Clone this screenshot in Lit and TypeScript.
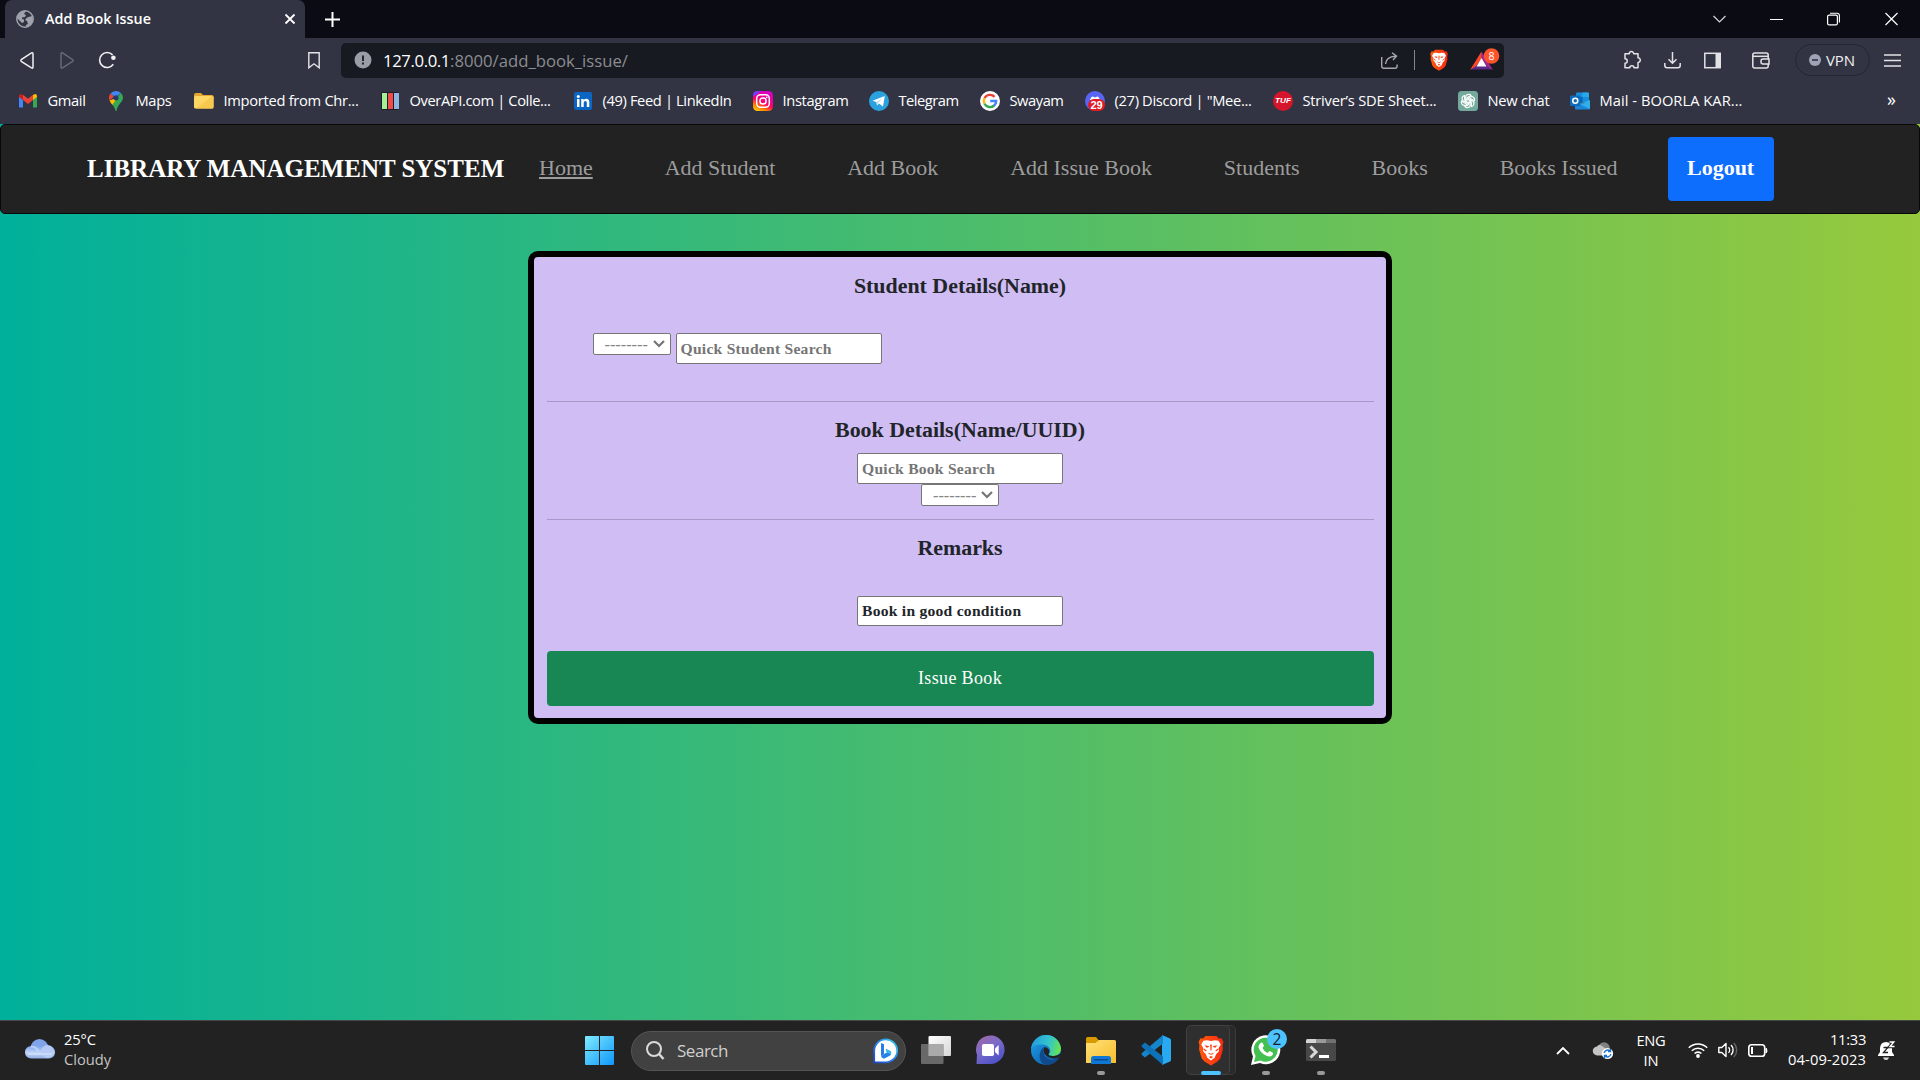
import { LitElement, html, css, svg, type TemplateResult } from "lit";
import { customElement, property } from "lit/decorators.js";

/** Single line label whose tracking is adjusted so that it fills a given width. */
@customElement("fit-label")
class FitLabel extends LitElement {
  @property() text = "";
  @property({ type: Number }) w = 0;
  static styles = css`
    :host { display: inline-block; white-space: pre; flex: none; }
    .t { display: inline-block; }
  `;
  firstUpdated() {
    const s = this.renderRoot.querySelector(".t") as HTMLElement;
    const natural = s.getBoundingClientRect().width;
    s.style.letterSpacing = `${(this.w - natural) / this.text.length}px`;
  }
  render() {
    return html`<span class="t">${this.text}</span>`;
  }
}

const fit = (text: string, w: number) => html`<fit-label .text=${text} .w=${w}></fit-label>`;

const icon = (w: number, h: number, body: TemplateResult, vb = `0 0 ${w} ${h}`) =>
  html`<svg class="ic" width=${w} height=${h} viewBox=${vb} fill="none">${body}</svg>`;

const lion = svg`
  <path d="M7 1h11l2.400 2.600 2.600-.3L25 7l-.9 3 .3 4.500-2.600 9L19 26.600l-6.500 3.900L6 26.600 3.200 23.500.6 14.500.9 10 0 7l2-3.700 2.600.3z" fill="url(#lg)"/>
  <path d="M8.500 5.200 12.500 6l4-.8 3.600.6 2.200 3.700-2.200 3.800.5 2.700-3 3.200-1.400 3.600L12.500 25.500 8.800 22.800 7.400 19.200l-3-3.200.5-2.700L2.700 9.500l2.200-3.700z" fill="#fff"/>
  <path d="M6 10.300l4.200.6.3 1.100-2.300.8zM19 10.300l-4.200.6-.3 1.100 2.300.8zM11.700 9.500h1.600l-.3 6h-1zM9 17.500l3.500 1.200 3.500-1.200-2.200 1.900h-2.600zM10.500 22l2-1 2 1-2 1.400z" fill="#fb3d10"/>
  <path d="M5.200 14l2.600 2M19.800 14l-2.600 2" stroke="#fb3d10" stroke-width="1.100"/>
  <defs><linearGradient id="lg" x1="0" x2="1" y1="0" y2="0"><stop stop-color="#ff5a10"/><stop offset="1" stop-color="#f52a10"/></linearGradient></defs>`;

const bookmarks: { text: string; w: number; art: TemplateResult }[] = [
  { text: "Gmail", w: 38, art: svg`
    <path d="M1 5v11.500h4V9z" fill="#4285f4"/><path d="M19 5v11.500h-4V9z" fill="#34a853"/>
    <path d="M1 6V5q0-2 2-2l2 1v5z" fill="#c5221f"/><path d="M5 9V3.800l5 3.900 5-3.900V9l-5 4z" fill="#ea4335"/><path d="M15 9V4l2-1q2 0 2 2v1z" fill="#fbbc04"/>` },
  { text: "Maps", w: 36, art: svg`
    <path d="M10 0a7 7 0 0 0-5.500 2.600L10 7l4.700-5.200A7 7 0 0 0 10 0z" fill="#4285f4"/>
    <path d="M4.500 2.600A7 7 0 0 0 3.500 9.500L8 5.500z" fill="#ea4335"/>
    <path d="M3.500 9.500q.8 2 3 4.500L14 4.500 10 7z" fill="#fbbc04"/>
    <path d="M14.700 1.800Q18 5 16.500 9c-1 2.500-5 5-6 11h-1c-.5-2.500-1.500-4.500-3-6z" fill="#34a853"/>
    <circle cx="10" cy="6.800" r="2.600" fill="#253a6e"/>` },
  { text: "Imported from Chr...", w: 135, art: svg`
    <path d="M0 4q0-2 2-2h5l2 2h9q1.500 0 1.500 1.500V8H0z" fill="#e4a832"/><rect y="5" width="19.500" height="12.500" rx="1.500" fill="#fdd663"/><path d="M18 5q1.500 0 1.500 1.500V16q0 1.500-1.500 1.500H2z" fill="#f8c94e"/>` },
  { text: "OverAPI.com | Colle...", w: 141, art: svg`
    <rect x="1" y="1" width="18" height="18" rx="2" fill="#1c1d28"/><path d="M2 2h5v16H2z" fill="#a5ef94"/><path d="M8 2h5v16H8z" fill="#f04c4c"/><path d="M14 2h5v16h-5z" fill="#8db5dd"/>` },
  { text: "(49) Feed | LinkedIn", w: 129, art: svg`
    <rect x="1" y="1" width="18" height="18" rx="2" fill="#0a66c2"/><path d="M4 8h2.500v8H4zM8.200 8h2.400v1.200Q11.500 7.800 13.300 7.800q3 0 3 3.500V16h-2.500v-4.200q0-1.800-1.300-1.800-1.800 0-1.800 2V16H8.200z" fill="#fff"/><circle cx="5.250" cy="5.400" r="1.500" fill="#fff"/>` },
  { text: "Instagram", w: 66, art: svg`
    <defs><linearGradient id="ig" x1=".1" y1="1" x2=".6" y2="0"><stop stop-color="#ffd600"/><stop offset=".25" stop-color="#ff7a00"/><stop offset=".5" stop-color="#ff0069"/><stop offset="1" stop-color="#d300c5"/></linearGradient></defs>
    <rect width="20" height="20" rx="4.500" fill="url(#ig)"/><path d="M0 6V4.500Q0 0 4.500 0H8z" fill="#7638fa"/>
    <rect x="3.700" y="3.700" width="12.600" height="12.600" rx="3.800" stroke="#fff" stroke-width="1.500"/><circle cx="10" cy="10" r="3.100" stroke="#fff" stroke-width="1.500"/><circle cx="13.700" cy="6.300" r=".9" fill="#fff"/>` },
  { text: "Telegram", w: 60, art: svg`
    <circle cx="10" cy="10" r="10" fill="#2ba2de"/><path d="M3.500 9.800 15.800 5 14 15.500l-4-3-2 2-.6-3.500z" fill="#fff"/><path d="M7.500 11l6-4-4.500 5-1 2.500z" fill="#b9d9ec"/>` },
  { text: "Swayam", w: 54, art: svg`
    <circle cx="10" cy="10" r="10" fill="#fff"/><g stroke-width="2.400"><path d="M14.600 5.900A6.200 6.200 0 0 0 4.500 7.200" stroke="#ea4335"/><path d="M4.500 7.200a6.200 6.200 0 0 0 0 5.600" stroke="#fbbc05"/><path d="M4.500 12.800a6.200 6.200 0 0 0 9.700 1.700" stroke="#34a853"/><path d="M14 14.700A6 6 0 0 0 16.200 10h-6" stroke="#4285f4"/></g>` },
  { text: "(27) Discord | \"Mee...", w: 137, art: svg`
    <circle cx="10" cy="10" r="10" fill="#5865f2"/><path d="M5 9q.6-3 3-3.700l.7 1h2.600l.7-1q2.400.7 3 3.700z" fill="#fff"/><rect x="3" y="8" width="17" height="12" rx="6" fill="#e01b24"/><text x="11.500" y="17.800" text-anchor="middle" font-size="11" font-weight="700" fill="#fff" font-family="Liberation Sans, sans-serif">29</text>` },
  { text: "Striver’s SDE Sheet...", w: 134, art: svg`
    <circle cx="10" cy="10" r="10" fill="#d5152c"/><text x="10" y="12.300" text-anchor="middle" font-size="6.500" font-weight="700" font-style="italic" fill="#fff" textLength="16" lengthAdjust="spacingAndGlyphs" font-family="Liberation Sans, sans-serif">TUF</text>` },
  { text: "New chat", w: 62, art: svg`
    <rect width="20" height="20" rx="3.500" fill="#74aa9c"/><g stroke="#fff" stroke-width="1.100">${[0, 60, 120, 180, 240, 300].map(
      (a) => svg`<path transform="rotate(${a} 10 10)" d="M7.700 11.300V6.200Q7.900 3.400 10.600 3.200q1.600 0 2.500 1.100L9.200 6.600v3"/>`)}</g>` },
  { text: "Mail - BOORLA KAR...", w: 143, art: svg`
    <rect x="6" y="1.500" width="13" height="10" rx="1" fill="#1490df"/><path d="M12.500 1.500H18q1 0 1 1V6h-6.500z" fill="#28a8ea"/><path d="M6 6h6.500v5H6z" fill="#0364b8"/><path d="M5 9l8 4.500L20 9v8.500q0 1-1 1H6q-1 0-1-1z" fill="#1a86d9"/><path d="M20 9v9L9 13z" fill="#3cc0f2" opacity=".7"/><rect y="4.500" width="10.500" height="10.500" rx="1" fill="#0f6cbd"/><circle cx="5.250" cy="9.800" r="2.500" stroke="#fff" stroke-width="1.500"/>` },
];

@customElement("browser-chrome")
class BrowserChrome extends LitElement {
  static styles = css`
    :host { display: block; height: 124px; background: #323443; color: #fff; font: 14.700px/20px "Open Sans", "Noto Sans", sans-serif; box-sizing: border-box; }
    .ic { display: block; flex: none; overflow: visible; }
    .tabs { display: flex; height: 38px; background: #0b0b14; padding-left: 5px; align-items: center; }
    .tab { display: flex; align-items: center; width: 300px; height: 38px; background: #323443; border-radius: 7px 7px 0 0; padding: 0 10px 0 11px; box-sizing: border-box; font-weight: 600; font-size: 14.300px; }
    .tab fit-label { margin-left: 11px; flex: 1; }
    .plus { margin-left: 20px; }
    .controls { margin-left: auto; display: grid; grid-template-columns: repeat(4, 57.300px); justify-items: center; align-items: center; }
    .bar { display: flex; align-items: center; height: 44px; padding-left: 20px; }
    .fwd { margin-left: 27px; }
    .reload { margin-left: 24px; }
    .mark { margin-left: 191px; }
    .url { display: flex; align-items: center; box-sizing: border-box; width: 1163px; height: 35px; margin-left: 21px; padding: 0 4px 0 13px; background: #181a21; border-radius: 5px; font-size: 16.700px; }
    .addr { display: flex; flex: 1; margin-left: 11px; padding-top: 1px; }
    .path { color: #8b8d92; }
    .sep { width: 1px; height: 20px; background: #85868a; margin: 0 14px 0 16px; }
    .bat { margin-left: 21px; }
    .actions { display: flex; align-items: center; margin-left: 120px; }
    .actions .dl { margin-left: 23px; } .actions .side { margin-left: 23px; } .actions .wal { margin-left: 31px; }
    .vpn { display: flex; align-items: center; gap: 5px; box-sizing: border-box; width: 75px; height: 32px; margin: 0 14px 0 25px; padding-left: 13px; border: 1px solid #242633; border-radius: 16px; font-size: 15px; color: #f0f0f2; }
    .vpn fit-label { padding-bottom: 1px; }
    .marks { display: grid; grid-template-columns: 88px 88px 186px 193px 180px 116px 111px 105px 188px 185px 112px 1fr auto; align-items: center; height: 38px; padding: 0 24px 0 18px; }
    .mk { display: flex; align-items: center; gap: 10px; }
    .mk fit-label { padding-bottom: 2px; margin-left: -0.500px; }
    .more { font-size: 18px; line-height: 18px; padding-bottom: 4px; }
  `;
  render() {
    return html`
      <div class="tabs">
        <div class="tab">
          ${icon(18, 18, svg`<circle cx="9" cy="9" r="8.200" stroke="#9fa1ab" stroke-width="1.500"/><path d="M1 8Q2 2 8 1h2L8 4l2 1-1 2-3 .5V9l2 .5L8 12l-2 1z" fill="#9fa1ab"/><path d="M11 7.500 16 6l1 4q-1 6-7 7.200V15l2-1-1-3-2-1z" fill="#9fa1ab"/>`)}
          ${fit("Add Book Issue", 106)}
          ${icon(10, 10, svg`<path d="M.5.5l9 9M9.500.5l-9 9" stroke="#fff" stroke-width="1.800"/>`)}
        </div>
        <div class="plus">${icon(15, 15, svg`<path d="M7.500 0v15M0 7.500h15" stroke="#fff" stroke-width="2"/>`)}</div>
        <div class="controls">
          ${icon(13, 8, svg`<path d="M.5 1 6.500 7l6-6" stroke="#d5d5d8" stroke-width="1.200"/>`)}
          ${icon(13, 1, svg`<path d="M0 .5h13" stroke="#fff"/>`)}
          ${icon(13, 13, svg`<rect x="-.4" y="2.100" width="9.800" height="9.800" rx="1.500" stroke="#fff" stroke-width="1.200"/><path d="M2 .2h7q2.400 0 2.400 2.400V9.500" stroke="#fff" stroke-width="1.100"/>`)}
          ${icon(13, 13, svg`<path d="M.5 0l12 12M12.500 0l-12 12" stroke="#fff" stroke-width="1.200"/>`)}
        </div>
      </div>
      <div class="bar">
        ${icon(14, 17, svg`<path d="M11.500.9Q13 .3 13 2v13q0 1.700-1.500.9L1.200 9.300q-.8-.8 0-1.600z" stroke="#f0f0f2" stroke-width="1.500"/>`)}
        <div class="fwd">${icon(14, 17, svg`<path d="M1.500.9Q0 .3 0 2v13q0 1.700 1.500.9L11.800 9.300q.8-.8 0-1.600z" stroke="#6b6d78" stroke-width="1.400"/>`)}</div>
        <div class="reload">${icon(18, 17, svg`<path d="M13.600 2.900A7.500 7.500 0 1 0 14.300 12.300" stroke="#f0f0f2" stroke-width="1.600"/><circle cx="14.400" cy="5.800" r="2.300" fill="#f0f0f2"/>`)}</div>
        <div class="mark">${icon(12, 17, svg`<path d="M.8.800h10.400v15L6 11.800.8 15.800z" stroke="#e4e4e8" stroke-width="1.400"/>`)}</div>
        <div class="url">
          ${icon(18, 18, svg`<circle cx="9" cy="9" r="8.500" fill="#9a9ca6"/><path d="M9 4.500v5.500M9 11.500v2" stroke="#23252e" stroke-width="2"/>`)}
          <div class="addr">${fit("127.0.0.1", 67)}<span class="path">${fit(":8000/add_book_issue/", 178)}</span></div>
          ${icon(17, 17, svg`<path d="M.7 5v9q0 2.200 2.200 2.200h11q2.200 0 2.200-2.200v-1.500" stroke="#a7a8ac" stroke-width="1.400"/><path d="M4.500 12q.5-7.300 10-7.800M11 .8l4.500 3.400L12 8" stroke="#a7a8ac" stroke-width="1.400"/>`)}
          <span class="sep"></span>
          ${icon(20, 22, lion, "0 0 25 31")}
          <div class="bat">${icon(30, 22, svg`<path d="M11.500 3 1 20.500h21z" fill="#5b2a86"/><path d="M11.500 2.500V10L6 17l-6 4z" fill="#ff4724"/><path d="M11.500 2.500 23 21l-6-4-5.500-7z" fill="#a3278f"/><path d="M11.500 9l5 8.500h-10z" fill="#fff"/><circle cx="21.500" cy="7" r="7.800" fill="#fb542b"/><text x="21.500" y="10.700" text-anchor="middle" font-size="10.500" fill="#fff" font-family="Open Sans, sans-serif">8</text>`)}</div>
        </div>
        <div class="actions">
          ${icon(17, 18, svg`<path d="M1 2.800h4.300a2.200 2.200 0 1 1 4.400 0H14v4a2.200 2.200 0 1 1 0 4.600v5.400H10a2.100 2.100 0 1 0-4.200 0H1v-4.600a2.200 2.200 0 1 0 0-4.500z" stroke="#e2e2e6" stroke-width="1.500" stroke-linejoin="round"/>`)}
          <div class="dl">${icon(17, 17, svg`<path d="M8.500 0v11M4.500 7.300l4 4 4-4M.8 11v2.500q0 2.200 2.200 2.200h11q2.200 0 2.200-2.200V11" stroke="#e2e2e6" stroke-width="1.500"/>`)}</div>
          <div class="side">${icon(17, 17, svg`<rect x=".8" y="1.300" width="15.400" height="14.400" stroke="#e2e2e6" stroke-width="1.500"/><path d="M11.500 1H17v15h-5.500z" fill="#e2e2e6"/>`)}</div>
          <div class="wal">${icon(18, 17, svg`<rect x=".8" y="1" width="15.400" height="15" rx="2" stroke="#e2e2e6" stroke-width="1.500"/><path d="M1 4.300h15.500" stroke="#e2e2e6" stroke-width="1.500"/><path d="M17 7h-6q-2 0-2 2v1q0 2 2 2h6z" fill="#323443" stroke="#e2e2e6" stroke-width="1.500"/>`)}</div>
          <div class="vpn">${icon(12, 12, svg`<circle cx="6" cy="6" r="6" fill="#a0a2b8"/><path d="M3 6h6" stroke="#323443" stroke-width="1.600"/>`)}${fit("VPN", 29)}</div>
          ${icon(17, 13, svg`<path d="M0 1h17M0 6.500h17M0 12h17" stroke="#e2e2e6" stroke-width="1.500"/>`)}
        </div>
      </div>
      <div class="marks">
        ${bookmarks.map((b) => html`<div class="mk">${icon(20, 20, b.art)}${fit(b.text, b.w)}</div>`)}
        <span class="more">»</span>
      </div>`;
  }
}

@customElement("library-page")
class LibraryPage extends LitElement {
  static styles = css`
    :host { display: block; flex: 1; background: linear-gradient(to right, #00b09b, #96c93d); font-family: "Liberation Serif", serif; color: #212529; }
    nav { display: flex; align-items: center; box-sizing: border-box; height: 90px; padding-left: 86px; background: #222; border: 1px solid #080808; border-radius: 5px; font-size: 22px; color: #9d9d9d; }
    .brand { font-size: 25px; font-weight: 700; color: #fff; width: 452px; white-space: nowrap; }
    .links { display: flex; gap: 71.900px; padding-bottom: 3px; white-space: nowrap; }
    .on { text-decoration: underline; text-decoration-thickness: 2px; text-underline-offset: 2px; }
    .logout { display: flex; align-items: center; justify-content: center; box-sizing: border-box; width: 106px; height: 64px; margin-left: 50px; padding-bottom: 3px; border-radius: 4px; background: #0d6efd; color: #fff; font-weight: 700; }
    .card { box-sizing: border-box; width: 864px; height: 473px; margin: 37px auto 0; padding: 0 12.500px; border: 6px solid #000; border-radius: 10px; background: #d0bdf4; display: flex; flex-direction: column; align-items: center; }
    h2 { margin: 0; display: flex; align-items: center; font-size: 21.900px; font-weight: 700; box-sizing: border-box; }
    .h-a { height: 56px; padding-top: 2px; } .h-b { height: 51px; padding-top: 4px; } .h-c { height: 55px; }
    .row { align-self: stretch; display: flex; align-items: flex-start; gap: 5px; padding: 20px 0 37px 46px; }
    .field { box-sizing: border-box; width: 206px; height: 31px; flex: none; padding: 0 4px; line-height: 29px; border: 1px solid #767676; border-radius: 2px; background: #fff; font-size: 15.600px; letter-spacing: 0.250px; font-weight: 700; white-space: nowrap; }
    .ph { color: #757575; }
    .pick { display: flex; align-items: center; justify-content: space-between; box-sizing: border-box; width: 78px; height: 22px; flex: none; padding: 0 5px 0 11px; border: 1px solid #767676; border-radius: 2px; background: #fff; font-size: 16.300px; line-height: 18px; color: #858585; }
    .pick span { padding-top: 1px; }
    .line { align-self: stretch; height: 1px; flex: none; background: #a798c7; }
    .pick + .line { margin-top: 13px; }
    .remark { margin-top: 21px; height: 30px; line-height: 28px; }
    .issue { align-self: stretch; display: flex; align-items: center; justify-content: center; box-sizing: border-box; height: 55px; margin-top: 25px; padding-bottom: 1px; border-radius: 4px; background: #198754; color: #fff; font-size: 18px; letter-spacing: 0.350px; }
  `;
  private pick() {
    return html`<div class="pick"><span>--------</span><svg width="12" height="8" viewBox="0 0 12 8" fill="none"><path d="M1 1l5 5 5-5" stroke="#757575" stroke-width="2.200"/></svg></div>`;
  }
  render() {
    return html`
      <nav>
        <div class="brand">LIBRARY MANAGEMENT SYSTEM</div>
        <div class="links">
          <span class="on">Home</span><span>Add Student</span><span>Add Book</span><span>Add Issue Book</span><span>Students</span><span>Books</span><span>Books Issued</span>
        </div>
        <div class="logout">Logout</div>
      </nav>
      <div class="card">
        <h2 class="h-a">Student Details(Name)</h2>
        <div class="row">${this.pick()}<div class="field ph">Quick Student Search</div></div>
        <div class="line"></div>
        <h2 class="h-b">Book Details(Name/UUID)</h2>
        <div class="field ph">Quick Book Search</div>
        ${this.pick()}
        <div class="line"></div>
        <h2 class="h-c">Remarks</h2>
        <div class="field remark">Book in good condition</div>
        <div class="issue">Issue Book</div>
      </div>`;
  }
}

@customElement("task-bar")
class TaskBar extends LitElement {
  static styles = css`
    :host { display: grid; grid-template-columns: 585px auto 1fr; align-items: center; box-sizing: border-box; height: 60px; background: #222; border-top: 1px solid #484848; color: #fff; font: 14.700px/20px "Open Sans", "Noto Sans", sans-serif; }
    .ic { display: block; flex: none; overflow: visible; }
    .weather { display: flex; align-items: center; gap: 9px; padding-left: 25px; }
    .weather .ic { position: relative; top: -2px; }
    .two { display: flex; flex-direction: column; padding-bottom: 3px; }
    .dim { color: #c4c4c4; }
    .mid { display: flex; align-items: center; }
    .search { display: flex; align-items: center; box-sizing: border-box; width: 275px; height: 40px; margin: 0 2px 0 17px; padding: 0 7px 0 14px; border: 1px solid #555; border-radius: 20px; background: #414141; color: #cfcfcf; font-size: 17px; }
    .search fit-label { flex: 1; margin-left: 13px; }
    .apps { display: grid; grid-template-columns: repeat(8, 55px); }
    .app { display: grid; grid-template-rows: 42px 4px; height: 59px; box-sizing: border-box; padding-top: 8px; justify-items: center; align-items: center; position: relative; align-content: start; }
    .dot { width: 8px; height: 4px; border-radius: 2px; background: #999; }
    .run { width: 20px; background: #4cc2ff; }
    .tile { position: absolute; left: 3px; top: 4px; width: 44px; height: 50px; box-sizing: border-box; border: 1px solid #414141; border-radius: 5px; background: #2f2f2f; }
    .stack { position: absolute; left: 31px; top: 4px; width: 22px; height: 50px; box-sizing: border-box; border: 1px solid #3a3a3a; border-radius: 5px; background: #2a2a2a; }
    .app .ic, .app .dot { position: relative; }
    .tray { display: flex; align-items: center; justify-content: flex-end; padding-right: 25px; }
    .cloud { margin: 0 23px 0 23px; }
    .lang { align-items: center; margin-right: 22px; width: 30px; padding-bottom: 1px; }
    .status { display: flex; gap: 10px; align-items: center; padding-bottom: 1px; }
    .clock { align-items: flex-end; margin: 0 12px 0 20px; }
  `;
  render() {
    const app = (art: TemplateResult, state = "") => html`
      <div class="app">
        ${state === "run" ? html`<span class="stack"></span><span class="tile"></span>` : ""}
        ${art}${state ? html`<span class="dot ${state}"></span>` : ""}
      </div>`;
    return html`
      <div class="weather">
        ${icon(30, 20, svg`<defs><linearGradient id="cl" x1="0" x2="0" y1="0" y2="1"><stop stop-color="#7da5ee"/><stop offset=".55" stop-color="#c3d5f7"/><stop offset="1" stop-color="#8faee6"/></linearGradient></defs><circle cx="14.500" cy="9" r="9" fill="#7fa4ea"/><rect y="7" width="30" height="12.500" rx="6.200" fill="url(#cl)"/><circle cx="22.500" cy="12.500" r="6.500" fill="#b5cbf5"/><path d="M6 8q5-1 7 4M3 15h24" stroke="#d7e4fb" stroke-width="2" opacity=".6"/>`)}
        <div class="two">${fit("25°C", 32)}<span class="dim">${fit("Cloudy", 47)}</span></div>
      </div>
      <div class="mid">
        ${icon(29, 29, svg`<defs><linearGradient id="wn" x1="0" y1="0" x2="1" y2="1"><stop stop-color="#7fecff"/><stop offset="1" stop-color="#0f96fa"/></linearGradient></defs><path d="M1 0h13v14H0V1q0-1 1-1zM15 0h13q1 0 1 1v13H15zM0 15h14v14H1q-1 0-1-1zM15 15h14v13q0 1-1 1H15z" fill="url(#wn)"/>`)}
        <div class="search">
          ${icon(18, 19, svg`<circle cx="8" cy="8" r="7" stroke="#dadada" stroke-width="2"/><path d="M13 13l4.500 5" stroke="#dadada" stroke-width="2.500"/>`)}
          ${fit("Search", 51)}
          ${icon(25, 26, svg`<defs><linearGradient id="bg" x1="1" y1="0" x2="0" y2="1"><stop stop-color="#32d5e8"/><stop offset=".5" stop-color="#2a80f0"/><stop offset="1" stop-color="#1b48c8"/></linearGradient></defs><path d="M1.200 24.300V13A11.500 11.500 0 1 1 12.700 24.300z" fill="#fff" stroke="url(#bg)" stroke-width="1.800"/><path d="M8 5l3 1.200v10L8 18z" fill="#2a7bea"/><path d="M8 18l3.500-2.200 2.500-1.300-1.300-3.500 5 2.200q1.300 3-1 4.500L11.500 20.500Q9 21 8 18z" fill="#2583e8"/><path d="M12.500 10.800l5 2.200q1.500 1.700.3 3.500l-3.800-2z" fill="#35b9f0"/>`)}
        </div>
        <div class="apps">
          ${app(icon(30, 28, svg`<defs><linearGradient id="tv" x1="0" y1="0" x2="1" y2="1"><stop stop-color="#fff"/><stop offset="1" stop-color="#d6d6d6"/></linearGradient></defs><rect x="7.500" width="22.500" height="20" rx="1" fill="url(#tv)"/><rect y="8" width="22.500" height="20" rx="1" fill="#767676" opacity=".85"/><path d="M7.500 8h15v12h-15z" fill="#aaa"/>`))}
          ${app(icon(29, 29, svg`<defs><linearGradient id="ch" x1="0" y1="0" x2=".6" y2="1"><stop stop-color="#a5699f"/><stop offset=".5" stop-color="#7b6bc9"/><stop offset="1" stop-color="#4f53c7"/></linearGradient></defs><path d="M.5 28 1 19A14.300 14.300 0 1 1 14.500 28z" fill="url(#ch)"/><rect x="6" y="8" width="12" height="12" rx="1.800" fill="#fff"/><path d="M19 12.500 22.700 9v10.500L19 16z" fill="#fff"/>`))}
          ${app(icon(30, 30, svg`<defs><linearGradient id="e1" x1="0" x2="1" y1=".3" y2=".5"><stop stop-color="#229be0"/><stop offset=".6" stop-color="#35c6c9"/><stop offset="1" stop-color="#66e34f"/></linearGradient><linearGradient id="e2" x1="0" x2="1" y1="0" y2="1"><stop stop-color="#1ea4e8"/><stop offset="1" stop-color="#0a50a8"/></linearGradient></defs><circle cx="15" cy="15" r="15" fill="url(#e2)"/><path d="M.3 12.500A15 15 0 0 1 30 13.500c0 5.500-4 7.500-8 7.500-3 0-4.500-1-4-2 3-2.500 1-9-6.500-9.500C6 9 1 11 .3 14z" fill="url(#e1)"/><path d="M13 12c-3 7 3 14 10 12.500 3-.5 4.500-1.500 5-1.500A15 15 0 0 1 15 30C7 28 7 16 13 12z" fill="#114a8b"/><path d="M13.500 12q-2 3-.5 6 3 5 10 5.500 3.500 0 5.500-1.500l1.200-4q-3 3.500-8.500 3-4.500-.5-3.700-2.300 1.500-1.500.3-4.200-1.500-2.500-4.300-2.500z" fill="#222"/>`))}
          ${app(icon(30, 27, svg`<defs><linearGradient id="fo" x1="0" y1="0" x2="1" y2="1"><stop stop-color="#ffe078"/><stop offset="1" stop-color="#f9be2c"/></linearGradient></defs><path d="M0 1.500Q0 0 1.500 0H10l3 3.500V9H0z" fill="#d99a00"/><path d="M0 6h9.500L13 3h15.500Q30 3 30 4.500V26H0z" fill="url(#fo)"/><path d="M5 27v-5.500Q5 19 7.500 19h15q2.500 0 2.500 2.500V27z" fill="#0f78d4"/><path d="M8.500 22.800h13" stroke="#0b4a94" stroke-width="1.500" stroke-linecap="round"/>`), "dot-on")}
          ${app(icon(30, 30, svg`<path d="M21 0 29 3.500Q30 4 30 5v20q0 1-1 1.500L21 30z" fill="#29a9f2"/><path d="M22 0v8.500L4 22.500 1 20q-1-1 0-2z" fill="#1586cc"/><path d="M22 30v-8.500L4 7.500 1 10q-1 1 0 2z" fill="#0d72b8"/>`))}
          ${app(icon(26, 31, lion, "0 0 25 31"), "run")}
          ${app(icon(30, 30, svg`<path d="M0 30 2 21.500A14.500 14.500 0 1 1 9 28z" fill="#fff"/><path d="M3 27l1.500-6A12 12 0 1 1 9.500 25.500z" fill="#43c04f"/><path d="M9 8.500q2-2 3 0l1 2.500-1.500 2q1.500 3.500 5 5l2-2 3 1.500q1.500 1-.5 3-2 2-6 0-6-3-7.500-8 0-2.500 1.500-4z" fill="#fff"/><circle cx="26" cy="4" r="10" fill="#4cc2ff"/><text x="26" y="9.700" text-anchor="middle" font-size="15.500" fill="#102030" font-family="Open Sans, sans-serif">2</text>`), "dot-on")}
          ${app(icon(30, 22, svg`<rect width="30" height="22" rx="1.500" fill="#484848"/><path d="M1.500 0H10v4H0V1.500Q0 0 1.500 0z" fill="#d4d4d4"/><path d="M10 0h10v4H10z" fill="#999"/><path d="M20 0h8.500Q30 0 30 1.500V4H20z" fill="#707070"/><path d="M4.500 7.500l5.500 5.500-5.500 5.500" stroke="#d8d8d8" stroke-width="3"/><path d="M13 17.500h10" stroke="#fff" stroke-width="3"/>`), "dot-on")}
        </div>
      </div>
      <div class="tray">
        ${icon(14, 8, svg`<path d="M1 7l6-6 6 6" stroke="#fff" stroke-width="1.800"/>`)}
        <div class="cloud">${icon(20, 17, svg`<circle cx="11" cy="6" r="5.800" fill="#808080"/><path d="M4.500 13.500a4.500 4.500 0 0 1-.5-9Q6 2 9 4l8 6v3.500z" fill="#c4c4c4"/><circle cx="14.500" cy="11.500" r="5.600" fill="#fff"/><path d="M11.200 11a3.500 3.500 0 0 1 6-1.800M17.800 12a3.500 3.500 0 0 1-6 1.800M17.500 7v2.500H15M11.500 16v-2.500H14" stroke="#1673cf" stroke-width="1.400"/>`)}</div>
        <div class="two lang">${fit("ENG", 29)}${fit("IN", 15)}</div>
        <div class="status">
          ${icon(20, 16, svg`<path d="M.8 5.800a13 13 0 0 1 18.400 0M3.800 8.800a8.800 8.800 0 0 1 12.400 0M6.600 11.500a4.800 4.800 0 0 1 6.800 0" stroke="#fff" stroke-width="1.600"/><circle cx="10" cy="14" r="1.900" fill="#fff"/>`)}
          ${icon(20, 16, svg`<path d="M.8 5.500h3L8 1.500v13l-4.200-4h-3z" stroke="#fff" stroke-width="1.400" stroke-linejoin="round"/><path d="M10.500 5.200a4 4 0 0 1 0 5.600M13 3a7 7 0 0 1 0 10" stroke="#fff" stroke-width="1.400"/><path d="M15.800 1a10 10 0 0 1 0 14" stroke="#666" stroke-width="1.400"/>`)}
          ${icon(20, 13, svg`<rect x=".8" y=".8" width="15.900" height="11.400" rx="2.800" stroke="#fff" stroke-width="1.600"/><path d="M3 3h2v7H3z" fill="#fff"/><path d="M17.500 4h1.300q1.200 2.500 0 5h-1.300z" fill="#fff"/>`)}
        </div>
        <div class="two clock">${fit("11:33", 36)}${fit("04-09-2023", 78)}</div>
        ${icon(17, 19, svg`<path d="M8 1q5.500 0 6 6v4l2 3v1H0v-1l2-3V7q.5-6 6-6z" fill="#fff"/><path d="M5 16.500h6q-.7 2.500-3 2.500t-3-2.500z" fill="#ddd"/><path d="M5.500 6.500h4.300l-4.300 5h4.500" stroke="#222" stroke-width="1.300"/><path d="M11.500 1h4.300L12 5.500h4.500" stroke="#222" stroke-width="3.400"/><path d="M11.500 1h4.300L12 5.500h4.500" stroke="#fff" stroke-width="1.400"/>`)}
      </div>`;
  }
}

@customElement("app-root")
class AppRoot extends LitElement {
  static styles = css`
    :host { display: flex; flex-direction: column; width: 1920px; height: 1080px; overflow: hidden; }
  `;
  render() {
    return html`<browser-chrome></browser-chrome><library-page></library-page><task-bar></task-bar>`;
  }
}
